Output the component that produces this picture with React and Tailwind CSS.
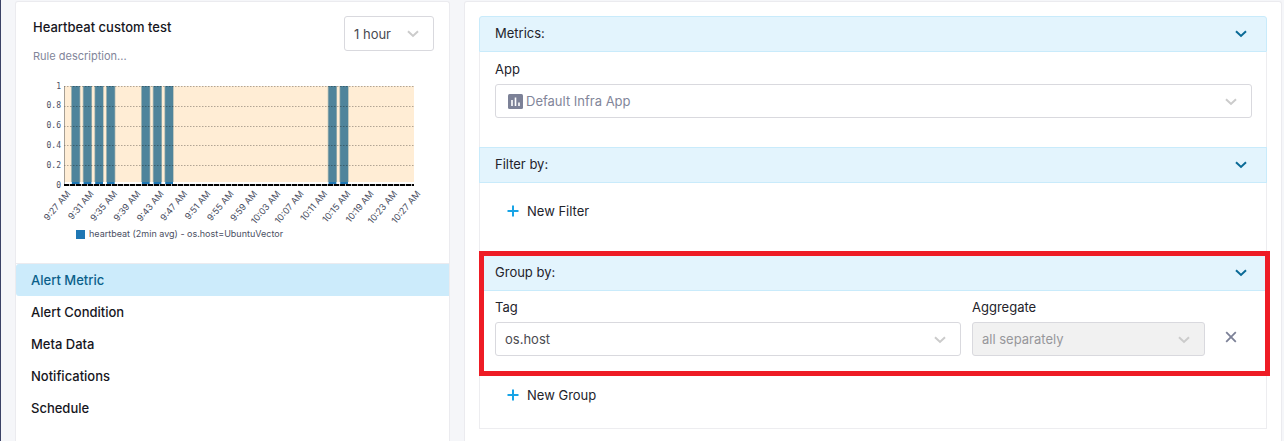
import React from "react";

const NAV = ["Alert Metric", "Alert Condition", "Meta Data", "Notifications", "Schedule"];

const TIMES = [
  "9:27 AM", "9:31 AM", "9:35 AM", "9:39 AM", "9:43 AM", "9:47 AM", "9:51 AM", "9:55 AM",
  "9:59 AM", "10:03 AM", "10:07 AM", "10:11 AM", "10:15 AM", "10:19 AM", "10:23 AM", "10:27 AM",
];

// Two-minute slots in which the host sent a heartbeat.
const BEATS = [1, 2, 3, 4, 7, 8, 9, 23, 24];

const PLOT = { x: 48, y: 7, w: 350, h: 99 };

function Chevron({ className }) {
  return (
    <svg viewBox="0 0 12 8" className={className} fill="none" stroke="currentColor" strokeWidth="2" aria-hidden="true">
      <path d="M1 1.3 6 6l5-4.7" />
    </svg>
  );
}

function Select({ id, label, hideLabel, options, disabled, icon, height = "h-[34px]", className = "", tone = "text-[#4a4a4f]" }) {
  return (
    <div className={className}>
      {!hideLabel && (
        <label htmlFor={id} className="mb-[5px] block leading-5 text-[#23232b]">
          {label}
        </label>
      )}
      <div className="relative">
        {icon}
        <select
          id={id}
          aria-label={hideLabel ? label : undefined}
          disabled={disabled}
          className={`block w-full appearance-none rounded-[3px] border border-[#d9d9de] bg-white pr-6 opacity-100 disabled:bg-[#f1f1f1] ${height} ${icon ? "pl-[30px]" : "pl-[9px]"} ${tone}`}
        >
          {options.map((o) => (
            <option key={o}>{o}</option>
          ))}
        </select>
        <Chevron className="pointer-events-none absolute right-[15px] top-[14px] h-2 w-3 text-[#cbcbcb]" />
      </div>
    </div>
  );
}

function Section({ title, first, children }) {
  return (
    <section>
      <h2>
        <button
          type="button"
          aria-expanded="true"
          className={`flex h-9 w-full items-center justify-between border border-[#c9ebfb] bg-[#e3f4fd] pb-[3px] pl-[15px] pr-[19px] text-left text-[#23232b] ${first ? "rounded-t-[3px]" : ""}`}
        >
          {title}
          <Chevron className="mt-[3px] h-2 w-3 text-[#0a6a96]" />
        </button>
      </h2>
      <div className="border-x border-[#ededf0] pl-[15px] pr-[14px]">{children}</div>
    </section>
  );
}

function AddButton({ children }) {
  return (
    <button type="button" className="ml-3 flex h-5 items-center gap-2 text-[#23232b]">
      <svg viewBox="0 0 12 12" className="h-3 w-3" stroke="#18a4e6" strokeWidth="2" aria-hidden="true">
        <path d="M6 .5v11M.5 6h11" />
      </svg>
      {children}
    </button>
  );
}

function HeartbeatChart() {
  const slot = PLOT.w / 30;
  const base = PLOT.y + PLOT.h;
  return (
    <svg viewBox="0 0 433 165" className="block w-full" role="img" aria-label="heartbeat chart">
      <rect x={PLOT.x} y={PLOT.y} width={PLOT.w} height={PLOT.h - 3} fill="#ffedd5" />
      {BEATS.map((n) => {
        const cx = PLOT.x + n * slot;
        return (
          <g key={n}>
            <rect x={cx - 4.6} y={PLOT.y} width="9.3" height={PLOT.h - 3} fill="#a9b7b0" />
            <rect x={cx - 3.8} y={PLOT.y} width="7.8" height={PLOT.h - 3} fill="#4f849b" />
            <rect x={cx - 3.8} y={base - 3} width="7.8" height="3" fill="#1f77b4" />
          </g>
        );
      })}
      {[1, 0.8, 0.6, 0.4, 0.2].map((v) => (
        <path
          key={v}
          d={`M${PLOT.x} ${Math.round(base - v * PLOT.h) + 0.5}h${PLOT.w}`}
          stroke="#000"
          strokeOpacity="0.3"
          strokeDasharray="1.5 1.5"
        />
      ))}
      <path d={`M${PLOT.x + 0.5} ${PLOT.y}v${PLOT.h}`} stroke="#6b6b6b" strokeOpacity="0.6" />
      <path d={`M${PLOT.x} ${base}h${PLOT.w}`} stroke="#b5b5b5" strokeWidth="2" />
      <path d={`M${PLOT.x} ${base}h${PLOT.w}`} stroke="#000" strokeWidth="2" strokeDasharray="5 1" />
      <g fontFamily="'DejaVu Sans Mono', monospace" fontSize="8" fill="#4b4f63" textAnchor="end">
        {["1", "0.8", "0.6", "0.4", "0.2", "0"].map((t) => (
          <text key={t} x={PLOT.x - 3} y={base - Number(t) * PLOT.h + 2.5}>{t}</text>
        ))}
      </g>
      <g fontSize="9" fill="#4b4f63" textAnchor="end">
        {TIMES.map((t, i) => (
          <text key={t} transform={`translate(${PLOT.x + 7 + i * slot * 2} ${base + 9}) rotate(-50)`}>{t}</text>
        ))}
      </g>
      <rect x="60" y="151" width="9" height="9" fill="#1f77b4" />
      <text x="73" y="158" fontSize="9" fill="#4b4f63">heartbeat (2min avg) - os.host=UbuntuVector</text>
    </svg>
  );
}

export default function App() {
  return (
    <div className="flex min-h-screen gap-[14px] border-l border-[#3b4266] bg-[#f5f6f9] pl-[14px] pr-[2px] pt-px font-['Inter',sans-serif] text-[13px] leading-5">
      <aside className="w-[435px] shrink-0 rounded-t-[3px] border border-b-0 border-[#ebebef] bg-white">
        <header className="flex items-start justify-between pl-[17px] pr-[15px] pt-[14px]">
          <div className="pt-px">
            <h1 className="font-medium text-[#16161d]">Heartbeat custom test</h1>
            <p className="mt-[9px] text-[11px] text-[#82869a]">Rule description...</p>
          </div>
          <Select id="range" label="Time range" hideLabel height="h-[35px]" options={["1 hour", "1 day"]} className="w-[90px]" />
        </header>
        <div className="mt-[13px]">
          <HeartbeatChart />
        </div>
        <nav className="mt-[19px] border-t border-[#ebebef]">
          <ul>
            {NAV.map((item, i) => (
              <li key={item}>
                <a
                  href="#"
                  aria-current={i === 0 ? "page" : undefined}
                  className={`block rounded-l-[3px] py-[6px] pl-[15px] font-medium ${i === 0 ? "bg-[#ccebfb] text-[#0a5f8a]" : "text-[#16161d]"}`}
                >
                  {item}
                </a>
              </li>
            ))}
          </ul>
        </nav>
      </aside>

      <main className="min-w-0 flex-1 rounded-t-[3px] border border-b-0 border-[#ebebef] bg-white p-[14px]">
        <Section title="Metrics:" first>
          <div className="pb-[29px] pt-[7px]">
            <Select
              id="app"
              label="App"
              options={["Default Infra App"]}
              tone="text-[#82869a]"
              icon={
                <svg viewBox="0 0 15 15" className="pointer-events-none absolute left-[13px] top-[10px] h-[15px] w-[15px]" aria-hidden="true">
                  <rect width="15" height="15" rx="1.5" fill="#7c8197" />
                  <path d="M4 6v6M7.5 3.5V12M11 8.5V12" stroke="#fff" strokeWidth="1.6" />
                </svg>
              }
            />
          </div>
        </Section>
        <Section title="Filter by:">
          <div className="pb-[34px] pt-[18px]">
            <AddButton>New Filter</AddButton>
          </div>
        </Section>
        <div className="relative">
          <Section title="Group by:">
            <div className="flex items-end pb-[29px] pt-[6px]">
              <Select id="tag" label="Tag" options={["os.host"]} className="min-w-0 flex-[2]" />
              <Select
                id="aggregate"
                label="Aggregate"
                options={["all separately"]}
                disabled
                tone="text-[#97979b]"
                className="ml-[11px] min-w-0 flex-1"
              />
              <button type="button" aria-label="Remove group" className="mb-[13px] ml-5 mr-[15px] h-3 w-3 text-[#7c8197]">
                <svg viewBox="0 0 12 12" className="h-3 w-3" stroke="currentColor" strokeWidth="1.8" aria-hidden="true">
                  <path d="M1.2 1.2l9.6 9.6M10.8 1.2l-9.6 9.6" />
                </svg>
              </button>
            </div>
            <AddButton>New Group</AddButton>
            <div className="h-[23px]" />
          </Section>
          <div className="border-t border-[#ededf0]" />
          <div className="pointer-events-none absolute -right-[3px] -top-1 left-0 h-[125px] border-[5px] border-[#ee1c25]" />
        </div>
      </main>
    </div>
  );
}
